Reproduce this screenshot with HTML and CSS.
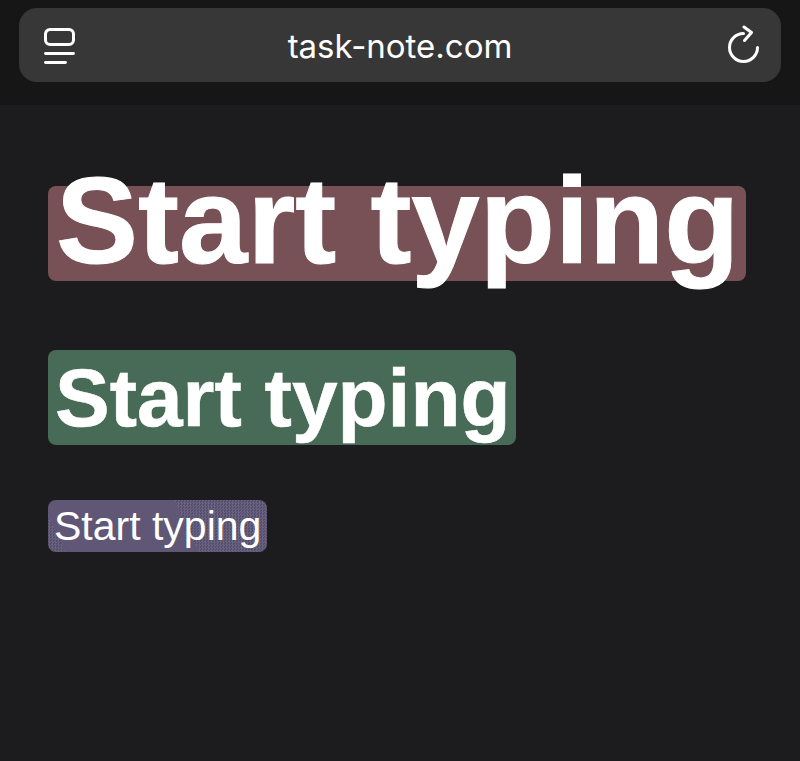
FILE: index.html
```html
<!DOCTYPE html>
<html lang="en">
<head>
    <meta charset="UTF-8">
    <title>task-note.com</title>
    <link rel="stylesheet" href="styles.css">
</head>
<body>
<header class="top-bar">
    <div class="address-bar">
        <svg class="icon" width="32" height="40" viewBox="0 0 32 40" fill="none" stroke="#fff" stroke-width="3" stroke-linecap="round">
            <rect x="1.500" y="4.500" width="28" height="15" rx="4.500"/>
            <path d="M1.500 28.500H29.500" stroke-width="2.800"/>
            <path d="M1.500 37.500H21.500" stroke-width="2.800"/>
        </svg>
        <span class="url">task-note.com</span>
        <svg class="icon" width="32" height="40" viewBox="0 0 32 40" fill="none" stroke="#fff" stroke-width="3" stroke-linecap="round" stroke-linejoin="round">
            <path d="M15.500 8.500A14 14 0 1 0 29.500 22.500"/>
            <path d="M16 2L23.500 7.500L16.500 15.500"/>
        </svg>
    </div>
</header>
<main class="note">
    <h1 class="heading heading-one">Start typing</h1>
    <h2 class="heading heading-two">Start typing</h2>
    <h3 class="heading heading-three">Start typing</h3>
</main>
</body>
</html>
```

FILE: styles.css
```css
html, body {
    margin: 0;
    height: 100%;
}
body {
    background-color: #1c1c1e;
    color: #fff;
    font-family: "Liberation Sans", Arial, sans-serif;
}
.top-bar {
    box-sizing: border-box;
    height: 105px;
    padding: 8px 19px 0;
    background-color: #161616;
}
.address-bar {
    display: flex;
    align-items: center;
    justify-content: space-between;
    box-sizing: border-box;
    height: 74px;
    padding: 0 21px 0 25px;
    background-color: #373737;
    border-radius: 18px;
}
.icon {
    display: block;
}
.url {
    padding: 2px 4px 0 0;
    font-family: Inter, sans-serif;
    font-size: 33px;
}
.note {
    display: flex;
    flex-direction: column;
    align-items: flex-start;
    padding: 81px 48px 0;
}
.heading {
    margin: 0;
    border-radius: 8px;
    white-space: nowrap;
}
.heading-one {
    margin-bottom: 69px;
    padding: 0 7px 26px 8px;
    background-color: #785157;
    font-size: 123px;
    line-height: 69px;
    -webkit-text-stroke: 1px #fff;
}
.heading-two {
    margin-bottom: 55px;
    padding: 0 5px 0 7px;
    background-color: #476b57;
    font-size: 82px;
    line-height: 95px;
    -webkit-text-stroke: 0.6px #fff;
}
.heading-three {
    padding: 0 6px;
    background:
        linear-gradient(65deg, transparent 7%, #5f5775 7%, #5f5775 62%, transparent 62%),
        repeating-conic-gradient(#696280 0 25%, #554e6a 0 50%) 0 0 / 3px 3px;
    font-size: 41px;
    font-weight: normal;
    line-height: 52px;
}
```
